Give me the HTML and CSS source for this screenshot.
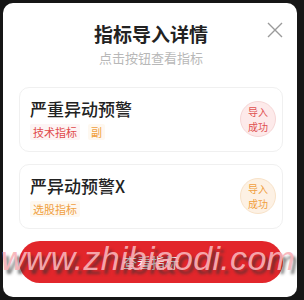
FILE: index.html
```html
<!DOCTYPE html>
<html lang="zh">
<head>
<meta charset="utf-8">
<link rel="stylesheet" href="styles.css">
</head>
<body>
<div class="modal">
  <div class="header">
    <div class="title">指标导入详情</div>
    <div class="subtitle">点击按钮查看指标</div>
    <svg class="close" viewBox="0 0 16 16" width="16" height="16"><path d="M1 1L15 15M15 1L1 15" stroke="#9a9a9a" stroke-width="1.4" fill="none"/></svg>
  </div>
  <div class="card">
    <div class="info">
      <div class="name">严重异动预警</div>
      <div class="tags"><span class="tag red">技术指标</span><span class="tag orange">副</span></div>
    </div>
    <div class="badge badge-red"><span>导入</span><span>成功</span></div>
  </div>
  <div class="card">
    <div class="info">
      <div class="name">严异动预警X</div>
      <div class="tags"><span class="tag orange">选股指标</span></div>
    </div>
    <div class="badge badge-orange"><span>导入</span><span>成功</span></div>
  </div>
  <div class="button">查看指标</div>
</div>
<div class="watermark">www.zhibiaodi.com</div>
</body>
</html>
```
FILE: styles.css
```css
html, body {
  margin: 0;
  padding: 0;
}
body {
  background: #161616;
  width: 304px;
  height: 300px;
  padding: 3px 7px 0 3px;
  box-sizing: border-box;
  font-family: "Noto Sans CJK SC", "Noto Sans", sans-serif;
  position: relative;
  overflow: hidden;
}
.modal {
  background: #fff;
  border-radius: 10px;
  height: 294px;
  box-sizing: border-box;
  padding: 18px 14px 14px 16px;
  display: flex;
  flex-direction: column;
}
.header {
  position: relative;
  text-align: center;
  margin-bottom: 20px;
}
.title {
  font-size: 19px;
  line-height: 26px;
  font-weight: 600;
  color: #222;
  margin-bottom: 2px;
}
.subtitle {
  font-size: 13px;
  line-height: 18px;
  color: #b8b8b8;
}
.close {
  position: absolute;
  right: 0;
  top: 1px;
}
.card {
  border: 1px solid #f0f0f0;
  border-radius: 10px;
  height: 65px;
  box-sizing: border-box;
  padding: 9px 6px 11px 10px;
  display: flex;
  align-items: center;
  justify-content: space-between;
  margin-bottom: 12px;
}
.info {
  display: flex;
  flex-direction: column;
  align-self: stretch;
}
.name {
  font-size: 17px;
  line-height: 24px;
  color: #222;
  font-weight: 500;
}
.tags {
  display: flex;
  gap: 8px;
  margin-top: 3px;
}
.tag {
  font-size: 11px;
  line-height: 16px;
  padding: 0 3px;
  border-radius: 2px;
}
.tag.red {
  color: #e0494a;
  background: #fdf4f4;
}
.tag.orange {
  color: #f0a040;
  background: #fef8f0;
}
.badge {
  width: 36px;
  height: 36px;
  border-radius: 50%;
  font-size: 10px;
  display: flex;
  flex-direction: column;
  align-items: center;
  justify-content: center;
  box-sizing: border-box;
}
.badge span {
  display: block;
  line-height: 15px;
  height: 15px;
}
.badge-red {
  background: #fdeaea;
  border: 1px solid #f6d6d6;
  color: #e05050;
}
.badge-orange {
  background: #fdf1e4;
  border: 1px solid #f8e2c8;
  color: #f0a040;
}
.button {
  height: 42px;
  border-radius: 21px;
  background: #e2262b;
  color: #fff;
  font-size: 14px;
  display: flex;
  align-items: center;
  justify-content: center;
}
.watermark {
  position: absolute;
  left: 1px;
  top: 240px;
  font-family: "Liberation Sans", sans-serif;
  font-style: italic;
  font-size: 34px;
  line-height: 36px;
  letter-spacing: 0.3px;
  color: rgba(248, 178, 184, 0.92);
  text-shadow: 3px 4px 3px rgba(50, 50, 50, 0.65);
  white-space: nowrap;
}
```
